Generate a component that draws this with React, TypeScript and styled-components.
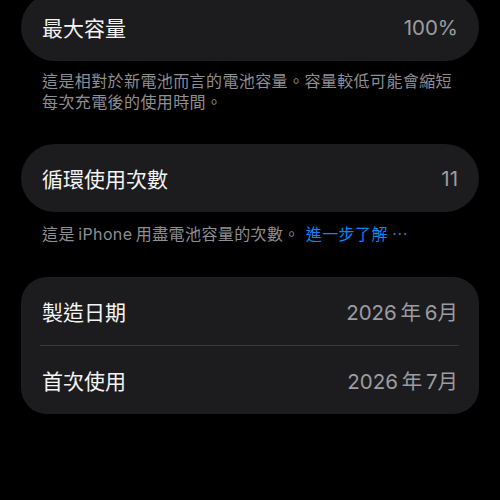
import styled, { createGlobalStyle } from "styled-components";

const GlobalStyle = createGlobalStyle`
  html, body {
    margin: 0;
    padding: 0;
    background: #000000;
  }
  body {
    font-family: "Inter", "Noto Sans CJK TC", sans-serif;
    -webkit-font-smoothing: antialiased;
  }
`;

const Page = styled.div`
  width: 500px;
  height: 500px;
  overflow: hidden;
  background: #000000;
  padding: 0 21px;
  box-sizing: border-box;
`;

const Inner = styled.div`
  margin-top: -7px;
  display: flex;
  flex-direction: column;
`;

const Card = styled.div<{ $radius?: number }>`
  background: #1c1c1e;
  border-radius: ${(p) => p.$radius ?? 34}px;
  display: flex;
  flex-direction: column;
`;

const Row = styled.div`
  height: 68px;
  display: flex;
  align-items: center;
  justify-content: space-between;
  padding: 0 21px;
`;

const Label = styled.span`
  font-family: "Noto Sans CJK TC", sans-serif;
  font-size: 21px;
  color: #f4f4f4;
`;

const Value = styled.span`
  font-family: "Inter", "Noto Sans CJK TC", sans-serif;
  font-size: 20.5px;
  color: #9c9ca1;
`;

const Divider = styled.div`
  height: 1px;
  margin: 0 20px 0 19px;
  background: #38383b;
`;

const Caption = styled.p<{ $top?: number }>`
  margin: ${(p) => p.$top ?? 10}px 0 0;
  padding: 0 21px;
  font-family: "Inter", "Noto Sans CJK TC", sans-serif;
  font-size: 16px;
  letter-spacing: 0.4px;
  line-height: 21px;
  color: #8e8e93;
`;

const Link = styled.span`
  color: #0a84ff;
  margin-left: 6px;
`;

const Dots = styled.span`
  color: #4e6d96;
  margin-left: 4px;
`;

const Spacer = styled.div<{ $h?: number }>`
  height: ${(p) => p.$h ?? 32}px;
`;

export default function App() {
  return (
    <>
      <GlobalStyle />
      <Page>
        <Inner>
          <Card>
            <Row>
              <Label>最大容量</Label>
              <Value>100%</Value>
            </Row>
          </Card>
          <Caption>
            這是相對於新電池而言的電池容量。容量較低可能會縮短
            <br />
            每次充電後的使用時間。
          </Caption>
          <Spacer $h={31} />
          <Card>
            <Row>
              <Label>循環使用次數</Label>
              <Value>11</Value>
            </Row>
          </Card>
          <Caption $top={12}>
            這是{"\u2009"}iPhone{"\u2009"}用盡電池容量的次數。
            <Link>進一步了解</Link>
            <Dots>⋯</Dots>
          </Caption>
          <Spacer />
          <Card $radius={26}>
            <Row>
              <Label>製造日期</Label>
              <Value>2026{"\u2009"}年{"\u2009"}6月</Value>
            </Row>
            <Divider />
            <Row>
              <Label>首次使用</Label>
              <Value>2026{"\u2009"}年{"\u2009"}7月</Value>
            </Row>
          </Card>
        </Inner>
      </Page>
    </>
  );
}
